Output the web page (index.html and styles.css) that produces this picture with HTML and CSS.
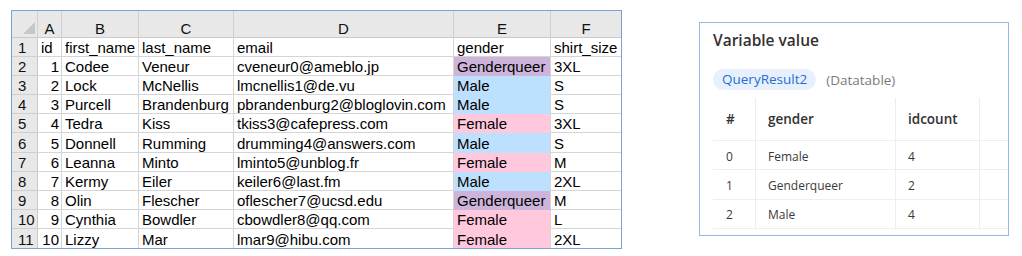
FILE: index.html
```html
<!DOCTYPE html>
<html>
<head>
<meta charset="utf-8">
<link rel="stylesheet" href="styles.css">
</head>
<body>
<div class="page">
  <div class="sheet">
    <div class="ch corner"><span class="tri"></span></div>
    <div class="ch">A</div><div class="ch">B</div><div class="ch">C</div><div class="ch">D</div><div class="ch">E</div><div class="ch last">F</div>

    <div class="rh">1</div><div class="c">id</div><div class="c">first_name</div><div class="c">last_name</div><div class="c">email</div><div class="c">gender</div><div class="c last">shirt_size</div>
    <div class="rh">2</div><div class="c num">1</div><div class="c">Codee</div><div class="c">Veneur</div><div class="c">cveneur0@ameblo.jp</div><div class="c gq">Genderqueer</div><div class="c last">3XL</div>
    <div class="rh">3</div><div class="c num">2</div><div class="c">Lock</div><div class="c">McNellis</div><div class="c">lmcnellis1@de.vu</div><div class="c male">Male</div><div class="c last">S</div>
    <div class="rh">4</div><div class="c num">3</div><div class="c">Purcell</div><div class="c">Brandenburg</div><div class="c">pbrandenburg2@bloglovin.com</div><div class="c male">Male</div><div class="c last">S</div>
    <div class="rh">5</div><div class="c num">4</div><div class="c">Tedra</div><div class="c">Kiss</div><div class="c">tkiss3@cafepress.com</div><div class="c female">Female</div><div class="c last">3XL</div>
    <div class="rh">6</div><div class="c num">5</div><div class="c">Donnell</div><div class="c">Rumming</div><div class="c">drumming4@answers.com</div><div class="c male">Male</div><div class="c last">S</div>
    <div class="rh">7</div><div class="c num">6</div><div class="c">Leanna</div><div class="c">Minto</div><div class="c">lminto5@unblog.fr</div><div class="c female">Female</div><div class="c last">M</div>
    <div class="rh">8</div><div class="c num">7</div><div class="c">Kermy</div><div class="c">Eiler</div><div class="c">keiler6@last.fm</div><div class="c male">Male</div><div class="c last">2XL</div>
    <div class="rh">9</div><div class="c num">8</div><div class="c">Olin</div><div class="c">Flescher</div><div class="c">oflescher7@ucsd.edu</div><div class="c gq">Genderqueer</div><div class="c last">M</div>
    <div class="rh">10</div><div class="c num">9</div><div class="c">Cynthia</div><div class="c">Bowdler</div><div class="c">cbowdler8@qq.com</div><div class="c female">Female</div><div class="c last">L</div>
    <div class="rh bottom">11</div><div class="c num bottom">10</div><div class="c bottom">Lizzy</div><div class="c bottom">Mar</div><div class="c bottom">lmar9@hibu.com</div><div class="c female bottom">Female</div><div class="c last bottom">2XL</div>
  </div>

  <div class="panel">
    <div class="title">Variable value</div>
    <div class="chiprow">
      <span class="chip">QueryResult2</span>
      <span class="type">(Datatable)</span>
    </div>
    <div class="vtable">
      <div class="th">#</div><div class="th">gender</div><div class="th">idcount</div><div class="th"></div>
      <div class="td">0</div><div class="td">Female</div><div class="td">4</div><div class="td"></div>
      <div class="td">1</div><div class="td">Genderqueer</div><div class="td">2</div><div class="td"></div>
      <div class="td">2</div><div class="td">Male</div><div class="td">4</div><div class="td"></div>
    </div>
  </div>
</div>
</body>
</html>
```

FILE: styles.css
```css
html, body {
  margin: 0;
  padding: 0;
  background: #ffffff;
}

.page {
  display: flex;
  align-items: flex-start;
  width: 1022px;
  height: 256px;
}

/* ---------- spreadsheet ---------- */
.sheet {
  margin: 10px 0 0 11px;
  display: grid;
  grid-template-columns: 26px 24px 77px 95px 220px 97px 70px;
  grid-template-rows: 27px repeat(11, 1fr);
  height: 239px;
  box-sizing: border-box;
  border: 1px solid #7ba2d6;
  font-family: "Liberation Sans", Arial, sans-serif;
  font-size: 15px;
  color: #000;
}

.ch, .rh, .c {
  box-sizing: border-box;
  border-right: 1px solid #d5d5d5;
  border-bottom: 1px solid #d5d5d5;
  display: flex;
  align-items: flex-end;
  line-height: 17px;
  white-space: nowrap;
  overflow: hidden;
}

.ch {
  background: #e8e8e8;
  justify-content: center;
  border-right-color: #d0d0d0;
  border-bottom-color: #c9c9c9;
  color: #111;
}

.corner {
  position: relative;
}

.tri {
  position: absolute;
  right: 2px;
  bottom: 3px;
  width: 0;
  height: 0;
  border-left: 12px solid transparent;
  border-bottom: 12px solid #c6c6c6;
}

.rh {
  background: #e8e8e8;
  padding-left: 6px;
  border-right-color: #c9c9c9;
  border-bottom-color: #d0d0d0;
  color: #111;
}

.c {
  padding: 0 3px;
}

.num {
  justify-content: flex-end;
  padding-right: 2px;
}

.last {
  border-right: none;
}

.bottom {
  border-bottom: none;
}

.gq {
  background: #cdb4db;
  border-bottom-color: #cdb4db;
}

.male {
  background: #bde0fe;
  border-bottom-color: #bde0fe;
}

.female {
  background: #ffc8dd;
  border-bottom-color: #ffc8dd;
}

/* ---------- variable panel ---------- */
.panel {
  margin: 22px 0 0 77px;
  width: 310px;
  height: 214px;
  box-sizing: border-box;
  border: 1px solid #97b6e6;
  padding: 6px 0 0 13px;
  overflow: hidden;
  font-family: "Open Sans", "Noto Sans", sans-serif;
  color: #323130;
}

.title {
  font-size: 15.5px;
  font-weight: 600;
  line-height: 22px;
  color: #323130;
}

.chiprow {
  margin-top: 18px;
  display: flex;
  align-items: center;
  gap: 10px;
  height: 21px;
}

.chip {
  background: #e7f0fc;
  color: #1f6fd6;
  border-radius: 11px;
  height: 21px;
  line-height: 21px;
  padding: 0 9px;
  font-size: 13.5px;
}

.type {
  color: #7a7a7a;
  font-size: 13.5px;
}

.vtable {
  margin-top: 8px;
  display: grid;
  grid-template-columns: 43px 140px 84px 80px;
  grid-template-rows: 43px repeat(3, 29.4px);
  width: 347px;
}

.th, .td {
  box-sizing: border-box;
  border-right: 1px solid #efeeed;
  border-bottom: 1px solid #efeeed;
  display: flex;
  align-items: center;
  padding-left: 12px;
  white-space: nowrap;
}

.th:nth-child(4n+1), .td:nth-child(4n+1) {
  padding-left: 13px;
}

.th {
  font-size: 13.5px;
  font-weight: 600;
  color: #323130;
}

.td {
  font-size: 12px;
  color: #3b3a39;
  padding-top: 2px;
}
```
